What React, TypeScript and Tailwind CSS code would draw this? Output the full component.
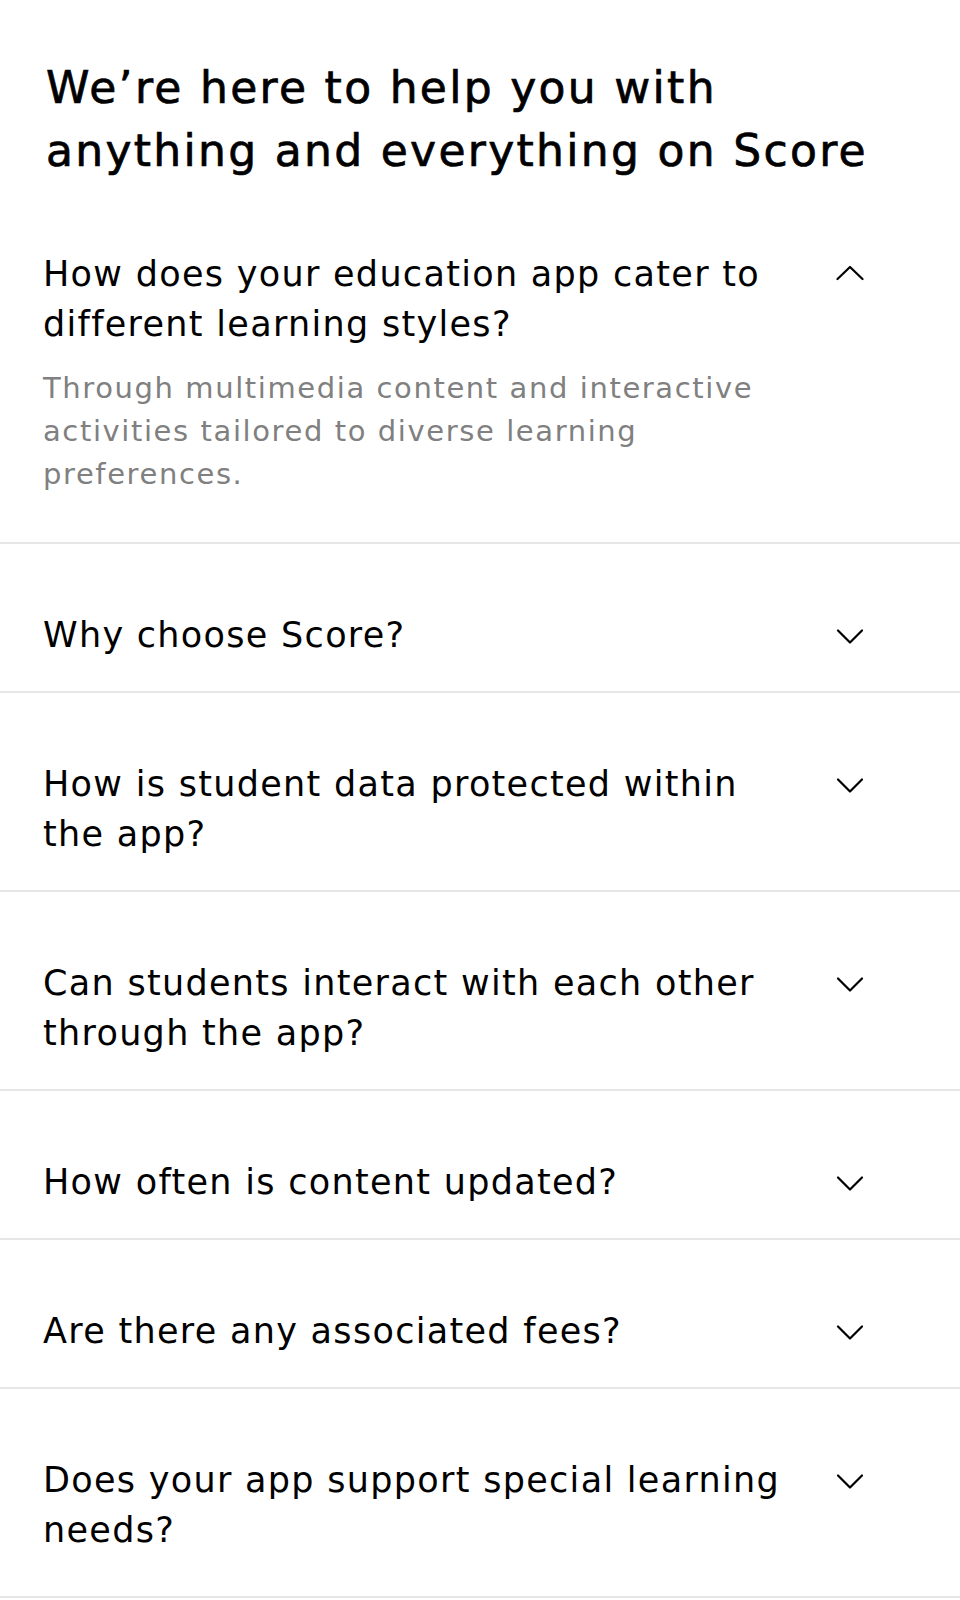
import React from "react";

const FONT = { fontFamily: "'DejaVu Sans', Inter, sans-serif" };

function Chevron({ up }: { up?: boolean }) {
  return (
    <svg width="28" height="28" viewBox="0 0 28 28" fill="none" aria-hidden="true">
      {up ? (
        <polyline points="1.5,19 14,7 26.5,19" stroke="#000" strokeWidth="2.2" strokeLinecap="round" strokeLinejoin="round" />
      ) : (
        <polyline points="2,9.5 14,21.5 26,9.5" stroke="#000" strokeWidth="2.2" strokeLinecap="round" strokeLinejoin="round" />
      )}
    </svg>
  );
}

const items: { q: string[]; open?: boolean; a?: string[]; last?: boolean }[] = [
  {
    q: ["How does your education app cater to", "different learning styles?"],
    open: true,
    a: [
      "Through multimedia content and interactive",
      "activities tailored to diverse learning",
      "preferences.",
    ],
  },
  { q: ["Why choose Score?"] },
  { q: ["How is student data protected within", "the app?"] },
  { q: ["Can students interact with each other", "through the app?"] },
  { q: ["How often is content updated?"] },
  { q: ["Are there any associated fees?"] },
  { q: ["Does your app support special learning", "needs?"], last: true },
];

export default function App() {
  return (
    <div className="w-[960px] min-h-[1600px] bg-white text-black" style={FONT}>
      <h1 className="pl-[46px] pt-[56px] pb-[1px] text-[44px] leading-[63px] font-normal tracking-[2.3px] [-webkit-text-stroke:0.7px_#000]">
        <span className="block whitespace-nowrap">We’re here to help you with</span>
        <span className="block whitespace-nowrap">anything and everything on Score</span>
      </h1>
      <div>
        {items.map((it, i) => (
          <div
            key={i}
            className={`border-b-2 border-[#e6e6e6] pl-[43px] pt-[66px] ${
              it.open ? "pb-[46px]" : it.last ? "pb-[41px]" : "pb-[31px]"
            }`}
          >
            <div className="flex items-start">
              <div className="w-[793px] text-[35px] leading-[50px] font-normal tracking-[1.3px]">
                {it.q.map((l, j) => (
                  <span key={j} className="block whitespace-nowrap">
                    {l}
                  </span>
                ))}
              </div>
              <div className="h-[50px] flex items-center">
                <Chevron up={it.open} />
              </div>
            </div>
            {it.a && (
              <div className="mt-[18px] text-[29px] leading-[43px] tracking-[1.6px] text-[#808080]">
                {it.a.map((l, j) => (
                  <span key={j} className="block whitespace-nowrap">
                    {l}
                  </span>
                ))}
              </div>
            )}
          </div>
        ))}
      </div>
    </div>
  );
}
